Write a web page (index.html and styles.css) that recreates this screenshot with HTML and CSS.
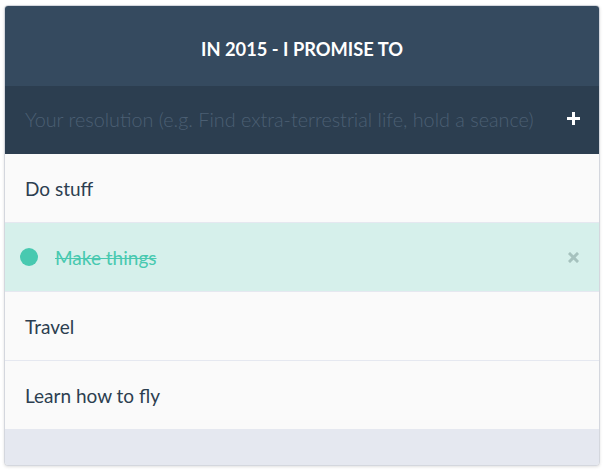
FILE: index.html
```html
<!DOCTYPE html>
<html>
<head>
<meta charset="utf-8">
<link rel="stylesheet" href="styles.css">
</head>
<body>
<div class="card">
  <header class="head">In 2015 - I promise to</header>
  <div class="entry">
    <span class="placeholder">Your resolution (e.g. Find extra-terrestrial life, hold a seance)</span>
    <svg class="plus" width="13" height="13" viewBox="0 0 13 13"><path d="M5 0h3v5h5v3H8v5H5V8H0V5h5z" fill="#fff"/></svg>
  </div>
  <ul class="list">
    <li class="item">Do stuff</li>
    <li class="item done">
      <span class="dot"></span>
      <span class="label">Make things</span>
      <svg class="x" width="11" height="11" viewBox="0 0 11 11"><path d="M2 2L9 9M9 2L2 9" stroke="#a6c2be" stroke-width="3" stroke-linecap="square"/></svg>
    </li>
    <li class="item">Travel</li>
    <li class="item">Learn how to fly</li>
  </ul>
  <div class="foot"></div>
</div>
</body>
</html>
```
FILE: styles.css
```css
html, body {
  margin: 0;
  padding: 0;
  background: #ffffff;
}
body {
  padding: 5px 4px 5px 4px;
  font-family: Lato, "Open Sans", sans-serif;
}
.card {
  border: 1px solid #d4d7de;
  border-radius: 4px;
  overflow: hidden;
  box-shadow: 0 1px 3px rgba(0,0,0,0.12);
  background: #fafafa;
}
.head {
  height: 80px;
  box-sizing: border-box;
  padding-top: 6px;
  background: #354a5f;
  color: #ffffff;
  font-weight: 700;
  font-size: 18.3px;
  text-transform: uppercase;
  display: flex;
  align-items: center;
  justify-content: center;
}
.entry {
  height: 68px;
  box-sizing: border-box;
  padding: 0 19px 3px 20px;
  background: #2c3e50;
  display: flex;
  align-items: center;
}
.placeholder {
  flex: 1;
  color: #4b5f73;
  font-weight: 300;
  font-size: 19.8px;
}
.plus {
  display: block;
}
.list {
  list-style: none;
  margin: 0;
  padding: 0;
}
.item {
  height: 68px;
  border-bottom: 1px solid #e5e8f0;
  display: flex;
  align-items: center;
  padding: 0 20px;
  font-size: 19px;
  color: #2c3e50;
}
.item.done {
  background: #d6f0eb;
  padding-left: 15px;
}
.dot {
  width: 18px;
  height: 18px;
  border-radius: 50%;
  background: #48c9b0;
  margin-right: 17px;
}
.label {
  flex: 1;
  color: #48c9b0;
  text-decoration: line-through;
}
.x {
  display: block;
}
.item:last-child {
  border-bottom: none;
}
.foot {
  height: 36px;
  background: #e5e8f0;
}
```
